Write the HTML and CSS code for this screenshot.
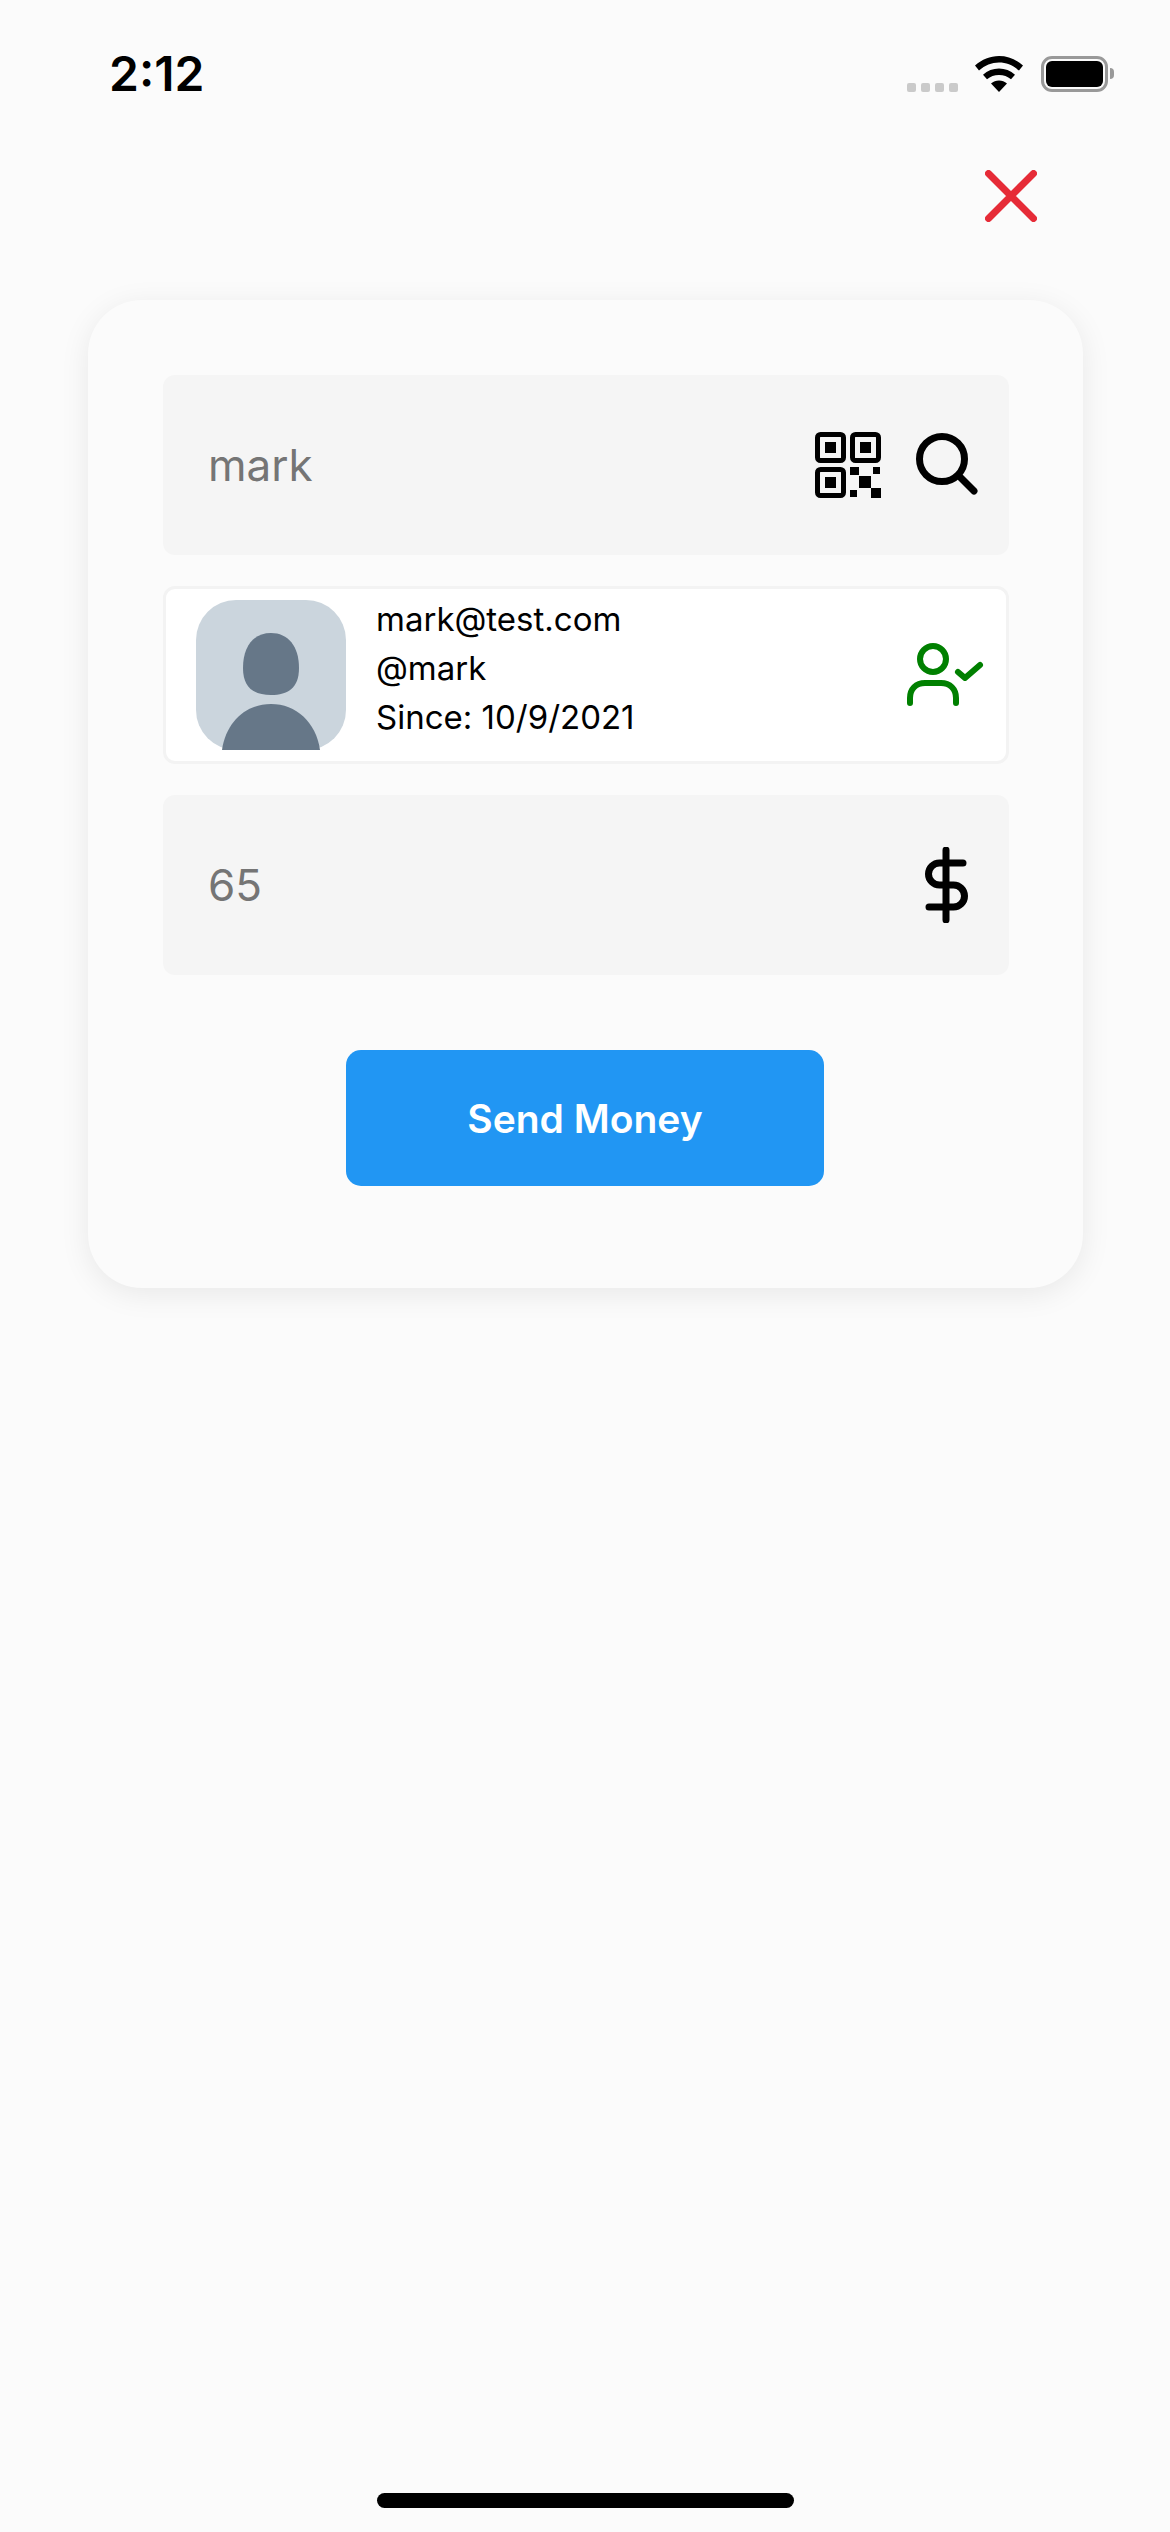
FILE: index.html
```html
<!DOCTYPE html>
<html lang="en">
<head>
    <meta charset="UTF-8">
    <title>Send Money</title>
    <link rel="stylesheet" href="styles.css">
</head>
<body>
<div class="page">
    <header class="status">
        <span class="time">2:12</span>
        <div class="status-icons">
            <div class="signal"><i></i><i></i><i></i><i></i></div>
            <svg class="wifi" width="48" height="36" viewBox="0 0 48 36">
                <path d="M24 0C15 0 7 3.400 0 9.500L4 14.500C10 9.300 16.600 6.500 24 6.500S38 9.300 44 14.500L48 9.500C41 3.400 33 0 24 0Z"/>
                <path d="M24 12.500C18 12.500 12.500 14.700 8 18.700L12 23.300C15.400 20.300 19.400 18.900 24 18.900S32.600 20.300 36 23.300L40 18.700C35.500 14.700 30 12.500 24 12.500Z"/>
                <path d="M24 24.500C21 24.500 18.300 25.500 16 27.500L24 36L32 27.500C29.700 25.500 27 24.500 24 24.500Z"/>
            </svg>
            <div class="battery"><div class="battery-fill"></div></div>
        </div>
    </header>

    <div class="close-row">
        <svg width="52" height="52" viewBox="0 0 52 52" fill="none" stroke="#e62b37" stroke-width="7" stroke-linecap="round">
            <path d="M3.500 3.500L48.500 48.500M48.500 3.500L3.500 48.500"/>
        </svg>
    </div>

    <main class="card">
        <div class="field">
            <span class="field-text">mark</span>
            <svg class="qr" width="66" height="66" viewBox="0 0 66 66">
                <g fill="none" stroke="#000" stroke-width="5">
                    <rect x="2.500" y="2.500" width="26" height="26" rx="3"/>
                    <rect x="37.500" y="2.500" width="26" height="26" rx="3"/>
                    <rect x="2.500" y="37.500" width="26" height="26" rx="3"/>
                </g>
                <rect x="10" y="10" width="11" height="11"/>
                <rect x="45" y="10" width="11" height="11"/>
                <rect x="10" y="45" width="11" height="11"/>
                <rect x="35" y="35" width="9" height="8"/>
                <rect x="58" y="35" width="7" height="7"/>
                <rect x="44" y="44" width="12" height="12"/>
                <rect x="35" y="58" width="7" height="7"/>
                <rect x="56" y="56" width="10" height="10"/>
            </svg>
            <svg class="search" width="66" height="66" viewBox="0 0 66 66" fill="none" stroke="#000" stroke-width="7" stroke-linecap="round">
                <circle cx="28" cy="27" r="22.500"/>
                <path d="M45 44L60 59"/>
            </svg>
        </div>

        <div class="user-row">
            <svg class="avatar" width="150" height="150" viewBox="0 0 150 150">
                <rect width="150" height="150" rx="40" fill="#cbd5dd"/>
                <path d="M47 68C47 46 58 33 75 33S103 46 103 68C103 88 92 95 75 95S47 88 47 68Z" fill="#667788"/>
                <path d="M26 150C30 122 50 104 75 104S120 122 124 150Z" fill="#667788"/>
            </svg>
            <div class="user-info">
                <div>mark@test.com</div>
                <div>@mark</div>
                <div>Since: 10/9/2021</div>
            </div>
            <svg class="user-check" width="78" height="66" viewBox="0 0 78 66" fill="none" stroke="#008000" stroke-width="6" stroke-linecap="round" stroke-linejoin="round">
                <circle cx="26" cy="17" r="13"/>
                <path d="M3 61V56C3 47 9 41 18 41H34C43 41 49 47 49 56V61"/>
                <path d="M51 30L58 36L73 23"/>
            </svg>
        </div>

        <div class="field">
            <span class="field-text">65</span>
            <svg class="dollar" width="50" height="76" viewBox="0 0 50 76" fill="none" stroke="#000" stroke-width="7" stroke-linecap="round">
                <path d="M24 3V73"/>
                <path d="M41 16H17.500A11 11 0 0 0 17.500 38H31.500A11 11 0 0 1 31.500 60H7"/>
            </svg>
        </div>

        <button class="send-btn">Send Money</button>
    </main>

    <div class="home-bar"></div>
</div>
</body>
</html>
```

FILE: styles.css
```css
html, body {
    margin: 0;
    padding: 0;
}

body {
    background: #fbfbfb;
    font-family: Inter, "Liberation Sans", sans-serif;
    color: #000;
}

.page {
    position: relative;
    display: flex;
    flex-direction: column;
    height: 2532px;
    overflow: hidden;
}

.status {
    display: flex;
    justify-content: space-between;
    align-items: center;
    height: 36px;
    padding: 56px 62px 0 109px;
}

.time {
    font-size: 48px;
    font-weight: 600;
    line-height: 36px;
}

.status-icons {
    display: flex;
    align-items: flex-end;
}

.signal {
    display: flex;
    gap: 5px;
    margin-right: 17px;
}

.signal i {
    width: 9px;
    height: 9px;
    border-radius: 2px;
    background: #cacaca;
}

.wifi {
    display: block;
    margin-right: 18px;
}

.battery {
    position: relative;
    box-sizing: border-box;
    width: 67px;
    height: 36px;
    padding: 2px;
    border: 3px solid #999;
    border-radius: 11px;
}

.battery::after {
    content: "";
    position: absolute;
    right: -9px;
    top: 9px;
    width: 4px;
    height: 11px;
    border-radius: 0 6px 6px 0;
    background: #999;
}

.battery-fill {
    height: 100%;
    border-radius: 6px;
    background: #000;
}

.close-row {
    display: flex;
    justify-content: flex-end;
    padding: 78px 133px 0 0;
}

.card {
    display: flex;
    flex-direction: column;
    box-sizing: border-box;
    width: 995px;
    height: 988px;
    margin: 78px 0 0 88px;
    padding: 75px 74px 75px 75px;
    background: #fbfbfb;
    border-radius: 54px;
    box-shadow: 0 6px 30px rgba(0, 0, 0, .08);
}

.field {
    display: flex;
    align-items: center;
    flex: none;
    height: 180px;
    padding: 0 29px 0 45px;
    background: #f5f5f5;
    border-radius: 12px;
}

.field-text {
    flex: 1;
    font-size: 44px;
    color: #757575;
}

.qr {
    margin-right: 33px;
}

.user-row {
    display: flex;
    align-items: center;
    box-sizing: border-box;
    height: 178px;
    margin: 31px 0;
    padding: 0 21px 0 30px;
    background: #fff;
    border: 3px solid #f3f3f3;
    border-radius: 12px;
}

.avatar {
    flex: none;
}

.user-info {
    flex: 1;
    padding: 0 0 14px 30px;
    font-size: 33px;
    line-height: 49px;
}

.dollar {
    margin-right: 8px;
}

.send-btn {
    align-self: center;
    width: 478px;
    height: 136px;
    margin: 75px 2px 0 0;
    border: 0;
    border-radius: 15px;
    background: #2196f3;
    color: #fff;
    font-family: inherit;
    font-size: 39px;
    font-weight: 600;
}

.home-bar {
    position: absolute;
    left: 377px;
    bottom: 24px;
    width: 417px;
    height: 15px;
    border-radius: 8px;
    background: #000;
}
```
